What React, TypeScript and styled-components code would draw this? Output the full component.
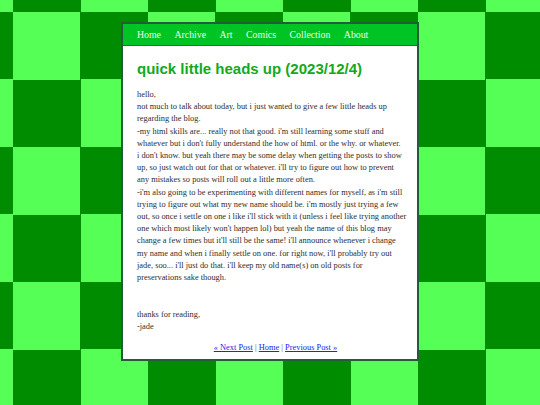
import styled, { createGlobalStyle } from 'styled-components';

const GlobalStyle = createGlobalStyle`
    html, body {
        margin: 0;
        padding: 0;
    }
    body {
        min-height: 405px;
        background-color: #55ff55;
        background-image: conic-gradient(#008c00 25%, #55ff55 0 50%, #008c00 0 75%, #55ff55 0);
        background-size: 135px 135px;
        background-position: 13px 12px;
        font-family: "Liberation Serif", "Times New Roman", serif;
    }
`

const Page = styled.div`
    display: flex;
    justify-content: center;
    padding-top: 22px;
`
const Card = styled.div`
    width: 298px;
    box-sizing: border-box;
    background: #ffffff;
    border: 2px solid #235c38;
    display: flex;
    flex-direction: column;
`
const NavBar = styled.nav`
    display: flex;
    gap: 13.5px;
    height: 21px;
    align-items: center;
    padding: 0 14px;
    background: #00c424;
    border-bottom: 1px solid #2a6a44;
`
const NavLink = styled.a`
    color: #eaffea;
    font-size: 9.8px;
    text-decoration: none;
`
const Content = styled.div`
    padding: 14px 3px 7px 14px;
`
const Title = styled.h1`
    margin: 0 0 11px;
    font-family: "Liberation Sans", Arial, sans-serif;
    font-weight: bold;
    font-size: 15px;
    line-height: 18px;
    color: #12a91e;
`
const Body = styled.div`
    font-size: 8.4px;
    line-height: 12.2px;
    color: #2e2e2e;
`
const Line = styled.span`
    display: block;
    white-space: nowrap;
`
const Gap = styled.div`
    height: 24.4px;
`
const PostNav = styled.div`
    margin-top: 10px;
    text-align: center;
    font-size: 8.4px;
    color: #555555;
`
const PostLink = styled.a`
    color: #2222ee;
    text-decoration: underline;
`

const navItems = ["Home", "Archive", "Art", "Comics", "Collection", "About"];

const postLines = [
    "hello,",
    "not much to talk about today, but i just wanted to give a few little heads up",
    "regarding the blog.",
    "-my html skills are... really not that good. i'm still learning some stuff and",
    "whatever but i don't fully understand the how of html. or the why. or whatever.",
    "i don't know. but yeah there may be some delay when getting the posts to show",
    "up, so just watch out for that or whatever. i'll try to figure out how to prevent",
    "any mistakes so posts will roll out a little more often.",
    "-i'm also going to be experimenting with different names for myself, as i'm still",
    "trying to figure out what my new name should be. i'm mostly just trying a few",
    "out, so once i settle on one i like i'll stick with it (unless i feel like trying another",
    "one which most likely won't happen lol) but yeah the name of this blog may",
    "change a few times but it'll still be the same! i'll announce whenever i change",
    "my name and when i finally settle on one. for right now, i'll probably try out",
    "jade, soo... i'll just do that. i'll keep my old name(s) on old posts for",
    "preservations sake though.",
];

export default function App() {
    return (
        <>
            <GlobalStyle />
            <Page>
                <Card>
                    <NavBar>
                        {navItems.map((item) => (
                            <NavLink key={item} href="#">{item}</NavLink>
                        ))}
                    </NavBar>
                    <Content>
                        <Title>quick little heads up (2023/12/4)</Title>
                        <Body>
                            {postLines.map((line, i) => (
                                <Line key={i}>{line}</Line>
                            ))}
                            <Gap />
                            <Line>thanks for reading,</Line>
                            <Line>-jade</Line>
                        </Body>
                        <PostNav>
                            <PostLink href="#">« Next Post</PostLink> | <PostLink href="#">Home</PostLink> | <PostLink href="#">Previous Post »</PostLink>
                        </PostNav>
                    </Content>
                </Card>
            </Page>
        </>
    );
}
